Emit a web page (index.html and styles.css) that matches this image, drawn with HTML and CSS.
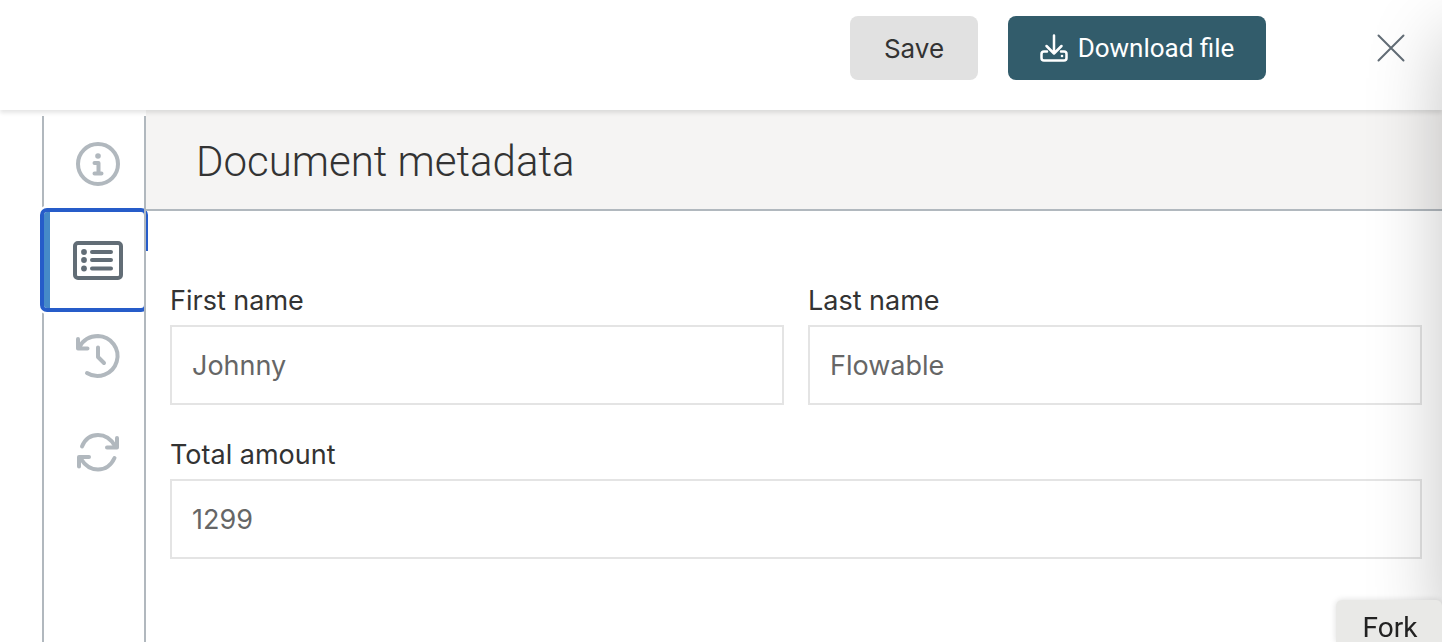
FILE: index.html
```
<!DOCTYPE html>
<html lang="en">
<head>
  <meta charset="utf-8">
  <title>Document metadata</title>
  <link rel="stylesheet" href="styles.css">
</head>
<body>
  <header class="toolbar">
    <button class="btn btn-default" type="button">Save</button>
    <button class="btn btn-primary" type="button">
      <svg class="btn-icon" viewBox="0 0 28 28" aria-hidden="true">
        <path d="M14 1.500V19M6.500 12L14 19.500L21.500 12"/>
        <path d="M7 17.500H4Q1.500 17.500 1.500 20V24Q1.500 26.500 4 26.500H24Q26.500 26.500 26.500 24V20Q26.500 17.500 24 17.500H21"/>
        <circle class="dot" cx="22" cy="22" r="1.300"/>
      </svg>
      <span>Download file</span>
    </button>
    <button class="close-btn" type="button" aria-label="Close">
      <svg viewBox="0 0 28 28" aria-hidden="true"><path d="M1.500 1.500L26.500 26.500M26.500 1.500L1.500 26.500"/></svg>
    </button>
  </header>

  <div class="content">
    <nav class="tabs">
      <button class="tab" type="button" aria-label="Information">
        <svg viewBox="0 0 52 52" aria-hidden="true">
          <circle cx="26" cy="26" r="20"/>
          <circle class="dot" cx="26" cy="18" r="2.800"/>
          <path d="M22.500 25H26.500V35M22.500 35.500H29.500"/>
        </svg>
      </button>
      <button class="tab active" type="button" aria-label="Metadata">
        <svg viewBox="0 0 52 52" aria-hidden="true">
          <rect x="3" y="9" width="46" height="35" rx="3"/>
          <path d="M20 18H39M20 26H39M20 34.500H39"/>
          <circle class="dot" cx="12" cy="18" r="2.900"/>
          <circle class="dot" cx="12" cy="26" r="2.900"/>
          <circle class="dot" cx="12" cy="34.500" r="2.900"/>
        </svg>
      </button>
      <button class="tab" type="button" aria-label="History">
        <svg viewBox="0 0 52 52" aria-hidden="true">
          <path d="M6 9V18.500H15.500M7 17.500C11 10 18 6 26 6A20 20 0 1 1 15 43"/>
          <path d="M26 17.500V27L32 33"/>
        </svg>
      </button>
      <button class="tab" type="button" aria-label="Refresh">
        <svg viewBox="0 0 52 52" aria-hidden="true">
          <path d="M10 20.500C13 13 19 9 26 9C33 9 39 13 43 20"/>
          <path d="M45 12V21.500H35"/>
          <path d="M42.500 32C39 39.500 33 43.500 26 43.500C19 43.500 13 39.500 9 33"/>
          <path d="M7 40.500V31H17"/>
        </svg>
      </button>
    </nav>

    <main class="panel">
      <div class="panel-header">
        <h1>Document metadata</h1>
      </div>
      <form class="metadata-form">
        <div class="field">
          <label for="firstName">First name</label>
          <input type="text" id="firstName" value="Johnny">
        </div>
        <div class="field">
          <label for="lastName">Last name</label>
          <input type="text" id="lastName" value="Flowable">
        </div>
        <div class="field field-wide">
          <label for="totalAmount">Total amount</label>
          <input type="text" id="totalAmount" value="1299">
        </div>
      </form>
    </main>
  </div>

  <div class="edge-shadow"></div>
  <button class="fork-btn" type="button">Fork</button>
</body>
</html>
```
FILE: styles.css
```
* {
  box-sizing: border-box;
}

body {
  display: flex;
  flex-direction: column;
  min-height: 100vh;
  margin: 0;
  overflow: hidden;
  background: #fff;
  color: #333;
  font-family: Inter, "Liberation Sans", sans-serif;
}

button {
  margin: 0;
  padding: 0;
  border: none;
  background: none;
  color: inherit;
  cursor: pointer;
}

svg {
  fill: none;
  stroke: currentColor;
  stroke-linecap: round;
  stroke-linejoin: round;
}

.dot {
  fill: currentColor;
  stroke: none;
}

/* Top bar */
.toolbar {
  position: relative;
  z-index: 3;
  display: flex;
  justify-content: flex-end;
  height: 110px;
  padding: 16px 19px 0;
  background: #fff;
  box-shadow: 0 3px 4px rgba(0,0,0,0.1);
}

.btn {
  display: flex;
  align-items: center;
  justify-content: center;
  height: 64px;
  border-radius: 8px;
  font-size: 26px;
}

.btn-default {
  width: 128px;
  margin-right: 30px;
  background: #e1e1e1;
  font-family: Inter, sans-serif;
}

.btn-primary {
  gap: 10px;
  width: 258px;
  background: #325c6b;
  color: #fff;
  font-family: Roboto, sans-serif;
}

.btn-icon {
  width: 28px;
  height: 28px;
  stroke-width: 2.5;
}

.close-btn {
  width: 64px;
  height: 64px;
  margin-left: 93px;
  color: #626d76;
}

.close-btn svg {
  display: block;
  width: 28px;
  height: 28px;
  margin: auto;
  stroke-width: 2;
}

/* Side tabs */
.content {
  display: flex;
  flex: 1;
}

.tabs {
  position: relative;
  z-index: 1;
  width: 104px;
  margin: 6px 0 0 42px;
  border-left: 2px solid #b1b8be;
}

.tabs::after {
  content: "";
  position: absolute;
  top: 0;
  right: 0;
  bottom: 0;
  width: 2px;
  background: #b1b8be;
}

.tab {
  display: flex;
  align-items: center;
  justify-content: center;
  width: 100px;
  height: 96px;
  padding-left: 8px;
  color: #b1b8be;
}

.tab svg {
  width: 52px;
  height: 52px;
  stroke-width: 4;
}

.tab.active {
  padding-left: 2px;
  border-left: 6px solid #468ac8;
  outline: 4px solid #265cc9;
  border-radius: 3px;
  box-shadow: 0 0 0 6px #fff;
  background: #fff;
  color: #626d76;
}

/* Metadata panel */
.panel {
  flex: 1;
}

.panel-header {
  position: relative;
  z-index: 2;
  display: flex;
  align-items: center;
  height: 101px;
  padding: 4px 50px 0;
  border-bottom: 2px solid #b1b8be;
  background: #f5f4f3;
}

h1 {
  margin: 0;
  font-family: Roboto, sans-serif;
  font-size: 42px;
  font-weight: 300;
}

.metadata-form {
  position: relative;
  z-index: 2;
  display: grid;
  grid-template-columns: 1fr 1fr;
  gap: 34px 24px;
  margin-top: 40px;
  padding: 34px 20px 34px 24px;
  background: #fff;
}

.field {
  display: flex;
  flex-direction: column;
  gap: 8px;
}

.field-wide {
  grid-column: 1 / -1;
}

label {
  font-size: 27px;
  line-height: 32px;
}

input {
  width: 100%;
  height: 80px;
  padding: 1px 20px 0;
  border: 2px solid #e4e4e4;
  background: #fff;
  color: #666;
  font-family: inherit;
  font-size: 27px;
}

/* Shade along the right edge of the window */
.edge-shadow {
  position: fixed;
  z-index: 4;
  top: 36px;
  bottom: 0;
  left: 100%;
  width: 200px;
  box-shadow: 0 0 76px rgba(0,0,0,0.23);
  pointer-events: none;
}

.fork-btn {
  position: fixed;
  z-index: 5;
  right: 0;
  bottom: 0;
  width: 106px;
  height: 42px;
  padding: 12px 0 0 2px;
  border-radius: 6px 6px 0 0;
  background: #e9e9e7;
  box-shadow: 0 0 6px rgba(0,0,0,0.14);
  color: #222;
  font-family: Roboto, sans-serif;
  font-size: 28px;
  line-height: 32px;
}
```
